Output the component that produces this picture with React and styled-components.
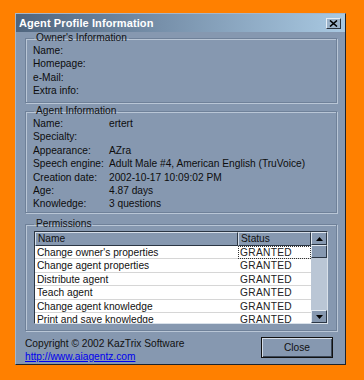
import React from "react"
import styled, { createGlobalStyle } from "styled-components"

const GlobalStyle = createGlobalStyle`
  html, body {
    margin: 0;
    padding: 0;
    background: #ff8000;
  }
  body {
    font-family: "Liberation Sans", Arial, sans-serif;
    font-size: 10.2px;
    color: #000;
  }
`

const Page = styled.div`
  width: 364px;
  height: 380px;
  padding: 13px 0 0 15px;
  box-sizing: border-box;
`

const Window = styled.div`
  width: 331px;
  height: 352px;
  box-sizing: border-box;
  background: #8698b0;
  border: 1px solid;
  border-color: #a7b6c8 #1c232c #1c232c #a7b6c8;
  display: flex;
  flex-direction: column;
`

const TitleBar = styled.div`
  height: 18px;
  display: flex;
  align-items: center;
  justify-content: space-between;
  padding: 0 4px 0 3px;
  background: linear-gradient(to right, #4f657e 0%, #7891ab 45%, #a9c9e2 100%);
`

const Title = styled.span`
  color: #fff;
  font-weight: bold;
  font-size: 11px;
  letter-spacing: 0.1px;
`

const CloseX = styled.button`
  width: 15px;
  height: 11px;
  padding: 0;
  border: 1px solid;
  border-color: #e6eef6 #2b333d #2b333d #e6eef6;
  background: #9cb3c9;
  display: flex;
  align-items: center;
  justify-content: center;
`

const Body = styled.div`
  padding: 0 8px 0 9px;
  display: flex;
  flex-direction: column;
`

const Group = styled.fieldset`
  margin: ${p => p.$top}px 0 0;
  padding: 0 6px 0 7px;
  height: ${p => p.$h}px;
  box-sizing: border-box;
  border: 1px solid #6f8199;
  box-shadow: inset 1px 1px 0 #b9c6d6, 1px 1px 0 #b9c6d6;
  min-width: 0;
`

const Legend = styled.legend`
  padding: 0 2px;
  margin-left: 1px;
  line-height: 12px;
  color: #111;
`

const InfoRow = styled.div`
  display: grid;
  grid-template-columns: 76px 1fr;
  height: 13.4px;
  line-height: 13.4px;
  white-space: nowrap;
  color: #0d0d0d;
`

const ListBox = styled.div`
  margin: 1px 2px 0 1px;
  height: 93px;
  box-sizing: border-box;
  border: 1px solid;
  border-color: #2b3644 #d9e1ea #d9e1ea #2b3644;
  display: flex;
  overflow: hidden;
`

const ListMain = styled.div`
  flex: 1;
  display: flex;
  flex-direction: column;
  background: #fff;
  overflow: hidden;
`

const HeaderRow = styled.div`
  display: grid;
  grid-template-columns: 203px 1fr;
  height: 14px;
  flex-shrink: 0;
  background: #8698b0;
`

const HeaderCell = styled.div`
  border: 1px solid;
  border-color: #d4dde8 #2b3644 #2b3644 #d4dde8;
  line-height: 12px;
  padding-left: 2px;
  overflow: hidden;
  color: #111;
`

const Row = styled.div`
  display: grid;
  grid-template-columns: 203px 1fr;
  height: 13.4px;
  line-height: 13px;
  border-bottom: 1px solid #d6d6d6;
  box-sizing: border-box;
  flex-shrink: 0;
  white-space: nowrap;
`

const Cell = styled.div`
  padding-left: 2px;
  color: #111;
`

const StatusCell = styled.div`
  padding-left: 2px;
  color: #222;
  letter-spacing: 0.3px;
  outline: ${p => (p.$focus ? "1px dotted #333" : "none")};
  outline-offset: -1px;
`

const Scrollbar = styled.div`
  width: 16px;
  display: flex;
  flex-direction: column;
  background: #bac6d5;
`

const ScrollBtn = styled.div`
  height: 13px;
  flex-shrink: 0;
  box-sizing: border-box;
  border: 1px solid;
  border-color: #e3eaf2 #2b3644 #2b3644 #e3eaf2;
  background: #8698b0;
  display: flex;
  align-items: center;
  justify-content: center;
`

const Track = styled.div`
  flex: 1;
`

const Footer = styled.div`
  display: flex;
  justify-content: space-between;
  align-items: flex-start;
  margin-top: 5px;
`

const Credits = styled.div`
  display: flex;
  flex-direction: column;
  line-height: 13px;
  color: #111;
  padding-top: 1px;
`

const Link = styled.a`
  color: #0000ee;
  text-decoration: underline;
`

const Button = styled.button`
  width: 72px;
  height: 21px;
  margin-top: 1px;
  margin-right: 4px;
  padding: 0;
  font-family: "Liberation Sans", Arial, sans-serif;
  font-size: 10.2px;
  color: #111;
  background: #8698b0;
  border: 1px solid #111;
  box-shadow: inset 1px 1px 0 #d4dde8, inset -1px -1px 0 #3b4757;
`

const Arrow = ({ down }) => (
  <svg width="7" height="4" viewBox="0 0 7 4">
    <path d={down ? "M0 0H7L3.5 4Z" : "M0 4H7L3.5 0Z"} fill="#000" />
  </svg>
)

const owner = ["Name:", "Homepage:", "e-Mail:", "Extra info:"]

const agent = [
  ["Name:", "ertert"],
  ["Specialty:", ""],
  ["Appearance:", "AZra"],
  ["Speech engine:", "Adult Male #4, American English (TruVoice)"],
  ["Creation date:", "2002-10-17 10:09:02 PM"],
  ["Age:", "4.87 days"],
  ["Knowledge:", "3 questions"],
]

const permissions = [
  "Change owner's properties",
  "Change agent properties",
  "Distribute agent",
  "Teach agent",
  "Change agent knowledge",
  "Print and save knowledge",
]

export default function App() {
  return (
    <Page>
      <GlobalStyle />
      <Window>
        <TitleBar>
          <Title>Agent Profile Information</Title>
          <CloseX>
            <svg width="9" height="7" viewBox="0 0 9 7">
              <path d="M1 0.5L8 6.5M8 0.5L1 6.5" stroke="#000" strokeWidth="1.6" />
            </svg>
          </CloseX>
        </TitleBar>
        <Body>
          <Group $top={0} $h={71}>
            <Legend>Owner's Information</Legend>
            {owner.map(label => (
              <InfoRow key={label}>
                <span>{label}</span>
              </InfoRow>
            ))}
          </Group>
          <Group $top={2} $h={108}>
            <Legend>Agent Information</Legend>
            {agent.map(([label, value]) => (
              <InfoRow key={label}>
                <span>{label}</span>
                <span>{value}</span>
              </InfoRow>
            ))}
          </Group>
          <Group $top={5} $h={113}>
            <Legend>Permissions</Legend>
            <ListBox>
              <ListMain>
                <HeaderRow>
                  <HeaderCell>Name</HeaderCell>
                  <HeaderCell>Status</HeaderCell>
                </HeaderRow>
                {permissions.map((name, i) => (
                  <Row key={name}>
                    <Cell>{name}</Cell>
                    <StatusCell $focus={i === 0}>GRANTED</StatusCell>
                  </Row>
                ))}
              </ListMain>
              <Scrollbar>
                <ScrollBtn>
                  <Arrow />
                </ScrollBtn>
                <ScrollBtn />
                <Track />
                <ScrollBtn>
                  <Arrow down />
                </ScrollBtn>
              </Scrollbar>
            </ListBox>
          </Group>
          <Footer>
            <Credits>
              <span>Copyright © 2002 KazTrix Software</span>
              <Link href="#">http://www.aiagentz.com</Link>
            </Credits>
            <Button>Close</Button>
          </Footer>
        </Body>
      </Window>
    </Page>
  )
}
